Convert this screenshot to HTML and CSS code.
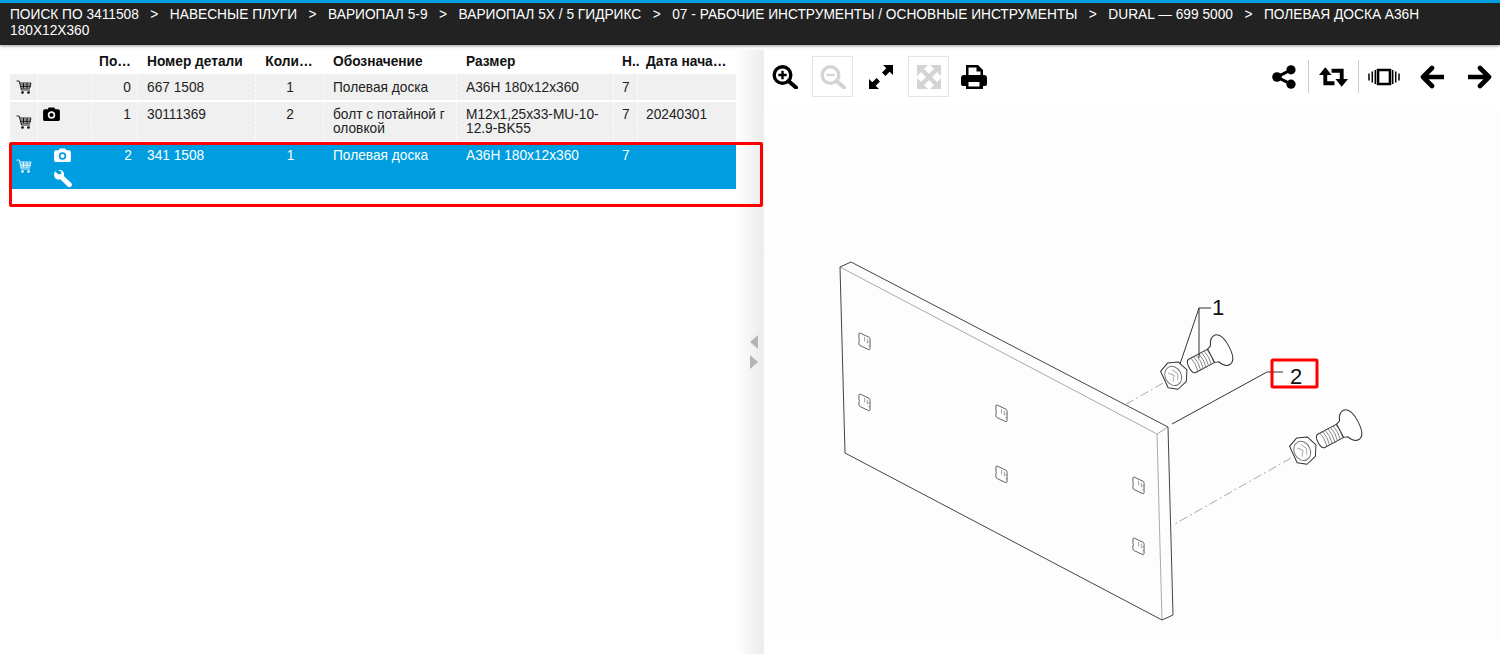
FILE: index.html
```html
<!DOCTYPE html>
<html lang="ru">

<head>
    <meta charset="UTF-8">
    <meta name="viewport" content="width=device-width, initial-scale=1.0">
    <title>Полевая доска A36H 180x12x360</title>
    <link rel="stylesheet" href="styles.css">
</head>

<body>

    <!-- Icon sprite -->
    <svg class="sprite" aria-hidden="true">
        <symbol id="i-cart" viewBox="0 0 16 16">
            <path d="M.5 2h2.700l2.200 9h8.600M3.700 4h11.300l-1.200 5.200H5M4.200 6h10.300M4.700 7.600h9.500M7.500 4v5.200M11 4v5.200" fill="none" stroke="currentColor" stroke-width=".85"/>
            <circle cx="6.500" cy="13.500" r="1.300" fill="currentColor"/>
            <circle cx="12.500" cy="13.500" r="1.300" fill="currentColor"/>
        </symbol>
        <symbol id="i-camera" viewBox="0 0 18 15">
            <path fill-rule="evenodd" fill="currentColor" d="M2 2.500h3L6 .5h6l1 2h3q2 0 2 2V13q0 2-2 2H2q-2 0-2-2V4.500q0-2 2-2zM9 4.500a4 4 0 1 0 0 8 4 4 0 0 0 0-8z"/>
            <circle cx="9" cy="8.500" r="2.200" fill="currentColor"/>
        </symbol>
        <symbol id="i-wrench" viewBox="0 0 18 18">
            <path fill="currentColor" d="M1 1.200 4.700 4.600l2.300-.6.600-2.300L4.200.2C6.500-.6 9.200.700 9.900 3c.3 1 .2 2-.1 2.900l7.400 7.200c1 1 1 2.500 0 3.500s-2.600 1-3.600 0L6.300 9.300C4.200 10.100 1.700 9.300.6 7.300-.2 5.800-.1 3.200 1 1.200z"/>
        </symbol>
        <symbol id="i-zoom-in" viewBox="0 0 26 24">
            <circle cx="10.500" cy="10" r="8.300" fill="none" stroke="currentColor" stroke-width="3.400"/>
            <path d="M16.500 16l7.500 6.500" fill="none" stroke="currentColor" stroke-width="4" stroke-linecap="round"/>
            <path d="M10.500 5.800v8.400M6.300 10h8.400" fill="none" stroke="currentColor" stroke-width="2.400"/>
        </symbol>
        <symbol id="i-zoom-out" viewBox="0 0 26 24">
            <circle cx="10.500" cy="10" r="8.300" fill="none" stroke="currentColor" stroke-width="3.400"/>
            <path d="M16.500 16l7.500 6.500" fill="none" stroke="currentColor" stroke-width="4" stroke-linecap="round"/>
            <path d="M6.300 10h8.400" fill="none" stroke="currentColor" stroke-width="2.400"/>
        </symbol>
        <symbol id="i-expand" viewBox="0 0 24 24">
            <path fill="currentColor" d="M14 0h10v10l-3.300-3.300-4.300 4.300-3.400-3.400 4.300-4.300zM10 24H0V14l3.300 3.300 4.300-4.300 3.400 3.400-4.300 4.300z"/>
        </symbol>
        <symbol id="i-compress" viewBox="0 0 24 24">
            <path fill="currentColor" d="M0 0h11L0 11zM24 0H13l11 11zM0 24h11L0 13zM24 24H13l11-11z"/>
            <path d="M4 4l16 16M20 4 4 20" fill="none" stroke="currentColor" stroke-width="4.500"/>
        </symbol>
        <symbol id="i-print" viewBox="0 0 26 24">
            <path fill-rule="evenodd" fill="currentColor" d="M5 0h12l5 5v5h1q3 0 3 3v6q0 2-2 2h-2v3H5v-3H2q-2 0-2-2v-6q0-3 3-3h2zM7.500 2.500V10h12V6.500h-4v-4zM7.500 17v4.500h11V17z"/>
        </symbol>
        <symbol id="i-share" viewBox="0 0 24 24">
            <circle cx="5" cy="12" r="4.800" fill="currentColor"/>
            <circle cx="19" cy="4.800" r="4.600" fill="currentColor"/>
            <circle cx="19" cy="19.200" r="4.600" fill="currentColor"/>
            <path d="M19 4.800 5 12l14 7.200" fill="none" stroke="currentColor" stroke-width="3"/>
        </symbol>
        <symbol id="i-retweet" viewBox="0 0 30 20">
            <path fill="currentColor" d="M0 8 6.500 0 13 8zM17 12h13l-6.500 8z"/>
            <path d="M6.500 6v10.500H16M13 3.500h10.500V14" fill="none" stroke="currentColor" stroke-width="4"/>
        </symbol>
        <symbol id="i-vibrate" viewBox="0 0 32 18">
            <path d="M10 2h12v14H10z" fill="none" stroke="currentColor" stroke-width="2.600"/>
            <path d="M1 5.500v7M4.300 3.500v11M7.300 2v14M24.700 2v14M27.700 3.500v11M31 5.500v7" fill="none" stroke="currentColor" stroke-width="1.500"/>
        </symbol>
        <symbol id="i-left" viewBox="0 0 24 24">
            <path d="M12 3 3 12l9 9M4 12h19" fill="none" stroke="currentColor" stroke-width="4.600" stroke-linecap="round" stroke-linejoin="round"/>
        </symbol>
        <symbol id="i-right" viewBox="0 0 24 24">
            <path d="M12 3l9 9-9 9M20 12H1" fill="none" stroke="currentColor" stroke-width="4.600" stroke-linecap="round" stroke-linejoin="round"/>
        </symbol>

        <!-- Nut and bolt, drawn along the x axis from the centre of the nut -->
        <symbol id="fastener" viewBox="-20 -30 100 60" overflow="visible">
            <g fill="#fff" stroke="#333" stroke-width="1" stroke-linejoin="round">
                <path d="M-11-10-1-14 9-10 13 1 7 11-4 14-12 8z"/>
                <ellipse cx="-2" cy="0" rx="8" ry="10" fill="none" stroke="#777"/>
                <path d="M-5-5-1 0-5 5M0-6 3 0 0 6" fill="none" stroke="#aaa"/>
                <path d="M19-7.500H41V7.500H19q-3-1-3-7.500T19-7.500z"/>
                <path d="M22-7.500q2 7.500 0 15M25-7.500q2 7.500 0 15M28-7.500q2 7.500 0 15M31-7.500q2 7.500 0 15M34-7.500q2 7.500 0 15M37-7.500q2 7.500 0 15M40-7.500q2 7.500 0 15" fill="none" stroke="#777" stroke-width=".8"/>
                <path d="M41-7.500 45-9Q48-17 54-16.500 61-15 61 0 61 15 54 16.500 48 17 45 9L41 7.500z"/>
            </g>
        </symbol>

        <!-- Square hole in the plate -->
        <symbol id="hole" viewBox="0 0 14 20">
            <path d="M1 2Q1 .5 2.500 1L12 5.500Q13 6 13 7.500V17.500Q13 19.500 11 18.500L2.500 14.500Q1 14 1 12.500V9.500Q2 8 1 6.500z" fill="none" stroke="#444" stroke-width=".9"/>
            <path d="M7 5V10M10 7V12M13 10.500H10.500M13 14.500H11" fill="none" stroke="#777" stroke-width=".7"/>
        </symbol>
    </svg>

    <header class="crumbs">
        <span>ПОИСК ПО 3411508</span>
        <span class="sep">&gt;</span>
        <span>НАВЕСНЫЕ ПЛУГИ</span>
        <span class="sep">&gt;</span>
        <span>ВАРИОПАЛ 5-9</span>
        <span class="sep">&gt;</span>
        <span>ВАРИОПАЛ 5X / 5 ГИДРИКС</span>
        <span class="sep">&gt;</span>
        <span>07 - РАБОЧИЕ ИНСТРУМЕНТЫ / ОСНОВНЫЕ ИНСТРУМЕНТЫ</span>
        <span class="sep">&gt;</span>
        <span>DURAL — 699 5000</span>
        <span class="sep">&gt;</span>
        <span>ПОЛЕВАЯ ДОСКА A36H</span>
        <span>180X12X360</span>
    </header>

    <main class="main">

        <!-- Parts list -->
        <section class="parts">
            <div class="parts-list">
                <table class="parts-table">
                    <colgroup>
                        <col class="c-cart">
                        <col class="c-icons">
                        <col class="c-pos">
                        <col class="c-num">
                        <col class="c-qty">
                        <col class="c-desc">
                        <col class="c-size">
                        <col class="c-n">
                        <col class="c-date">
                    </colgroup>
                    <thead>
                        <tr>
                            <th></th>
                            <th></th>
                            <th class="right">По…</th>
                            <th>Номер детали</th>
                            <th class="center">Коли…</th>
                            <th>Обозначение</th>
                            <th>Размер</th>
                            <th>Н..</th>
                            <th>Дата нача…</th>
                        </tr>
                    </thead>
                    <tbody>
                        <tr class="row-short">
                            <td class="cart"><svg class="ico-cart"><use href="#i-cart"/></svg></td>
                            <td></td>
                            <td class="right">0</td>
                            <td>667 1508</td>
                            <td class="center">1</td>
                            <td>Полевая доска</td>
                            <td>A36H 180x12x360</td>
                            <td>7</td>
                            <td></td>
                        </tr>
                        <tr class="row-tall">
                            <td class="cart"><svg class="ico-cart"><use href="#i-cart"/></svg></td>
                            <td class="icons"><svg class="ico-camera"><use href="#i-camera"/></svg></td>
                            <td class="right">1</td>
                            <td>30111369</td>
                            <td class="center">2</td>
                            <td>болт с потайной г оловкой</td>
                            <td>M12x1,25x33-MU-10-12.9-BK55</td>
                            <td>7</td>
                            <td>20240301</td>
                        </tr>
                        <tr class="row-selected">
                            <td class="cart"><svg class="ico-cart"><use href="#i-cart"/></svg></td>
                            <td class="icons icons-wide">
                                <svg class="ico-camera"><use href="#i-camera"/></svg>
                                <svg class="ico-wrench"><use href="#i-wrench"/></svg>
                            </td>
                            <td class="right">2</td>
                            <td>341 1508</td>
                            <td class="center">1</td>
                            <td>Полевая доска</td>
                            <td>A36H 180x12x360</td>
                            <td>7</td>
                            <td></td>
                        </tr>
                    </tbody>
                </table>
            </div>

            <div class="splitter">
                <span class="arrow arrow-left"></span>
                <span class="arrow arrow-right"></span>
            </div>

            <div class="row-mark"></div>
        </section>

        <!-- Drawing -->
        <section class="viewer">
            <div class="toolbar">
                <div class="tools">
                    <button class="tool"><svg class="ico-26"><use href="#i-zoom-in"/></svg></button>
                    <button class="tool off"><svg class="ico-26"><use href="#i-zoom-out"/></svg></button>
                    <button class="tool"><svg class="ico-24"><use href="#i-expand"/></svg></button>
                    <button class="tool off"><svg class="ico-24"><use href="#i-compress"/></svg></button>
                    <button class="tool tool-print"><svg class="ico-26"><use href="#i-print"/></svg></button>
                </div>
                <div class="tools tools-right">
                    <button class="tool2 split"><svg class="ico-24"><use href="#i-share"/></svg></button>
                    <button class="tool2 split"><svg class="ico-retweet"><use href="#i-retweet"/></svg></button>
                    <button class="tool2"><svg class="ico-vibrate"><use href="#i-vibrate"/></svg></button>
                    <button class="tool2 tool-back"><svg class="ico-24"><use href="#i-left"/></svg></button>
                    <button class="tool2"><svg class="ico-24"><use href="#i-right"/></svg></button>
                </div>
            </div>

            <div class="drawing">
                <!-- viewBox uses the coordinates of the sheet on the page -->
                <svg class="sheet" viewBox="764 110 736 530">
                    <path d="M840 267 1157 434 1162 620M1157 434 1168 427" stroke="#aaa" fill="none"/>
                    <path d="M845 453 840 267 851 262 1168 427 1173 615 1162 620z" stroke="#444" fill="none"/>

                    <use href="#hole" x="858" y="332" width="13" height="19"/>
                    <use href="#hole" x="858" y="393" width="13" height="19"/>
                    <use href="#hole" x="995" y="404" width="13" height="19"/>
                    <use href="#hole" x="995" y="465" width="13" height="19"/>
                    <use href="#hole" x="1132" y="476" width="13" height="19"/>
                    <use href="#hole" x="1132" y="537" width="13" height="19"/>

                    <g fill="none" stroke="#aaa" stroke-dasharray="9 3 2 3">
                        <path d="M1163 383 1125 405"/>
                        <path d="M1291 458 1173 525"/>
                    </g>

                    <g transform="translate(1175 375) rotate(-28)">
                        <use href="#fastener" x="-20" y="-30" width="100" height="60"/>
                    </g>
                    <g transform="translate(1304 450) rotate(-28)">
                        <use href="#fastener" x="-20" y="-30" width="100" height="60"/>
                    </g>

                    <g fill="none" stroke="#333" stroke-width="1">
                        <path d="M1211 308H1199L1180 364M1199 308V358"/>
                        <path d="M1172 424 1267 372H1283"/>
                    </g>
                    <text class="callout" x="1218" y="315">1</text>
                    <text class="callout" x="1296" y="384">2</text>
                    <rect class="callout-mark" x="1272" y="360" width="45" height="27" rx="1"/>
                </svg>
            </div>
        </section>
    </main>

</body>

</html>
```

FILE: styles.css
```css
* {
    box-sizing: border-box;
}

html,
body {
    height: 100%;
}

body {
    margin: 0;
    overflow: hidden;
    display: flex;
    flex-direction: column;
    font-family: "Liberation Sans", Arial, sans-serif;
    font-size: 13.72px;
    color: #222;
    background-color: #fff;
}

.sprite {
    display: none;
}

/* Breadcrumbs */
.crumbs {
    height: 45px;
    flex-shrink: 0;
    padding: 4px 10px 0;
    line-height: 16px;
    color: #fff;
    background-color: #222;
    border-top: 3px solid #009ee0;
    box-shadow: 0 1px 3px rgba(0, 0, 0, 0.4);
}

.crumbs .sep {
    margin: 0 7.700px;
}

.main {
    flex: 1;
    display: flex;
    min-height: 0;
}

/* Parts list */
.parts {
    position: relative;
    width: 764px;
    flex-shrink: 0;
    display: flex;
}

.parts-list {
    width: 736px;
    padding: 5px 0 0 10px;
}

.parts-table {
    width: 726px;
    table-layout: fixed;
    border-collapse: separate;
    border-spacing: 0;
    line-height: 14px;
}

.c-cart { width: 28px; }
.c-icons { width: 54px; }
.c-pos { width: 46px; }
.c-num { width: 118px; }
.c-qty { width: 68px; }
.c-desc { width: 133px; }
.c-size { width: 157px; }
.c-n { width: 24px; }
.c-date { width: 98px; }

.parts-table th {
    height: 24px;
    padding: 0 7px 1px 9px;
    text-align: left;
    white-space: nowrap;
    color: #111;
}

.parts-table th:nth-child(8),
.parts-table th:nth-child(9),
.parts-table td:nth-child(8),
.parts-table td:nth-child(9) {
    padding-left: 8px;
    padding-right: 0;
}

.parts-table td {
    padding: 6px 7px 0 9px;
    vertical-align: top;
    background-color: #f0f0f0;
    border-right: 1px dashed #fff;
    border-bottom: 2px solid #fff;
}

.parts-table td:last-child {
    border-right: none;
}

.parts-table .right {
    padding-right: 6px;
    padding-left: 0;
    text-align: right;
}

.parts-table .center {
    padding-left: 1px;
    padding-right: 0;
    text-align: center;
}

.parts-table th.right {
    padding-right: 7px;
}

.parts-table th.center {
    padding-left: 0;
    padding-right: 2px;
}

.row-short td {
    height: 28px;
    padding-top: 7px;
}

.row-tall td {
    height: 41px;
}

.row-selected td {
    height: 46px;
    color: #fff;
    background-color: #009ee0;
    border: none;
}

.parts-table td.cart {
    padding: 0 0 0 6px;
    vertical-align: middle;
    line-height: 0;
}

.parts-table td.icons {
    padding: 5px 0 0 5px;
    line-height: 0;
}

.parts-table td.icons-wide {
    padding-left: 16px;
}

.ico-cart {
    width: 16px;
    height: 16px;
}

.ico-camera {
    display: block;
    width: 17px;
    height: 14px;
}

.ico-wrench {
    display: block;
    width: 18px;
    height: 18px;
    margin-top: 8px;
}

.row-tall .ico-camera {
    color: #000;
}

.row-short .ico-cart,
.row-tall .ico-cart {
    color: #000;
}

/* Handle between the list and the drawing */
.splitter {
    flex: 1;
    margin-top: 5px;
    display: flex;
    flex-direction: column;
    align-items: flex-end;
    justify-content: center;
    gap: 6px;
    padding: 0 6px 0 0;
    background: linear-gradient(to right, #fff, #ececec);
}

.arrow {
    width: 0;
    height: 0;
    border-top: 7px solid transparent;
    border-bottom: 7px solid transparent;
}

.arrow-left {
    border-right: 8px solid #b5b5b5;
}

.arrow-right {
    border-left: 8px solid #b5b5b5;
}

/* Red frame painted over the selected row */
.row-mark {
    position: absolute;
    top: 97px;
    left: 9px;
    width: 754px;
    height: 65px;
    border: 3px solid #f00;
    border-radius: 2px;
}

/* Drawing */
.viewer {
    flex: 1;
    display: flex;
    flex-direction: column;
    min-width: 0;
}

.toolbar {
    height: 65px;
    flex-shrink: 0;
    display: flex;
    justify-content: space-between;
    align-items: flex-start;
    padding-top: 11px;
}

.tools {
    display: flex;
    align-items: center;
    gap: 7px;
}

.tools-right {
    gap: 0;
    padding-right: 0;
}

.tool {
    width: 41px;
    height: 41px;
    padding: 0;
    display: flex;
    align-items: center;
    justify-content: center;
    color: #000;
    background: none;
    border: 1px solid transparent;
}

.tool.off {
    color: #d4d4d4;
    border-color: #e4e4e4;
}

.tool-print {
    margin-left: -3px;
}

.tool2 {
    width: 50px;
    height: 41px;
    padding: 0;
    display: flex;
    align-items: center;
    justify-content: center;
    color: #000;
    background: none;
    border: none;
}

.tool2:last-child {
    width: 41px;
}

.tool-back {
    width: 46px;
    margin-right: 4px;
}

.split {
    height: 33px;
    margin-top: 4px;
    margin-bottom: 4px;
    border-right: 1px solid #ccc;
}

.ico-24 {
    width: 24px;
    height: 24px;
}

.ico-26 {
    width: 26px;
    height: 24px;
}

.ico-retweet {
    width: 29px;
    height: 20px;
}

.ico-vibrate {
    width: 32px;
    height: 18px;
}

.drawing {
    height: 530px;
    background-color: #fdfdfd;
}

.sheet {
    display: block;
    width: 736px;
    height: 530px;
}

.callout {
    font-family: "Liberation Sans", Arial, sans-serif;
    font-size: 22px;
    text-anchor: middle;
    fill: #111;
}

.callout-mark {
    fill: none;
    stroke: #f00;
    stroke-width: 3;
}
```
